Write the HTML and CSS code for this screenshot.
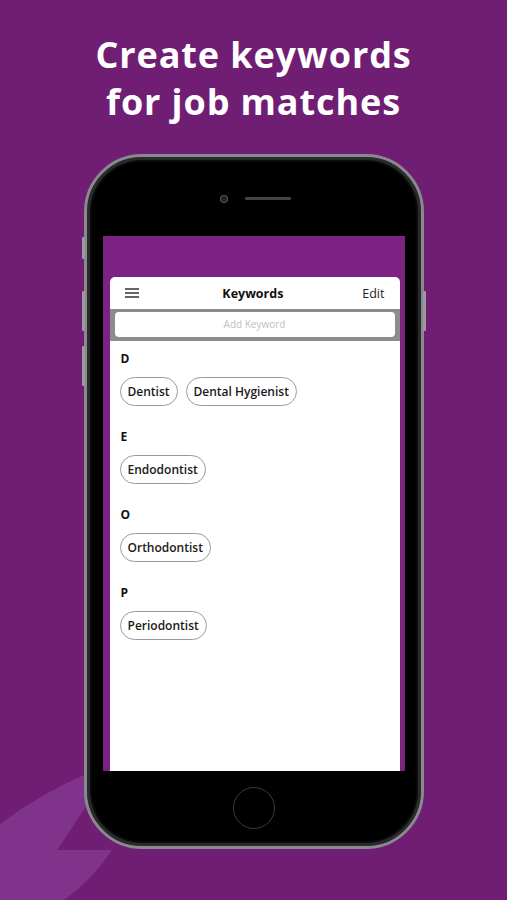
FILE: index.html
```html
<!DOCTYPE html>
<html>
<head>
<meta charset="utf-8">
<link rel="stylesheet" href="styles.css">
</head>
<body>
<svg class="deco" width="507" height="160" viewBox="0 740 507 160">
  <path d="M0,824 Q40,794 90,772 L90,800 Q72,828 57,850 L112,850 Q92,880 64,900 L0,900 Z" fill="#7f338a"/>
</svg>
<h1 class="title">Create keywords<br>for job matches</h1>
<div class="phone">
  <span class="btn btn-mute"></span>
  <span class="btn btn-vol1"></span>
  <span class="btn btn-vol2"></span>
  <span class="btn btn-power"></span>
  <div class="top">
    <span class="camera"></span>
    <span class="speaker"></span>
  </div>
  <div class="screen">
    <div class="card">
      <div class="navbar">
        <svg class="menu" width="14" height="10" viewBox="0 0 14 10"><path d="M0 1h14M0 5h14M0 9h14" stroke="#333" stroke-width="1.4"/></svg>
        <span class="nav-title">Keywords</span>
        <span class="edit">Edit</span>
      </div>
      <div class="search"><div class="input">Add Keyword</div></div>
      <div class="list">
        <div class="section">
          <div class="letter">D</div>
          <div class="chips"><span class="chip">Dentist</span><span class="chip">Dental Hygienist</span></div>
        </div>
        <div class="section">
          <div class="letter">E</div>
          <div class="chips"><span class="chip">Endodontist</span></div>
        </div>
        <div class="section">
          <div class="letter">O</div>
          <div class="chips"><span class="chip">Orthodontist</span></div>
        </div>
        <div class="section">
          <div class="letter">P</div>
          <div class="chips"><span class="chip">Periodontist</span></div>
        </div>
      </div>
    </div>
  </div>
  <div class="bottom"><span class="home"></span></div>
</div>
</body>
</html>
```
FILE: styles.css
```css
html, body { margin: 0; padding: 0; }
body {
  background: #701e74;
  width: 507px;
  height: 900px;
  overflow: hidden;
  position: relative;
  font-family: "Open Sans", "Liberation Sans", sans-serif;
}
.deco { position: absolute; left: 0; top: 740px; }
.title {
  margin: 0;
  padding-top: 31px;
  height: 123px;
  box-sizing: border-box;
  color: #fff;
  text-align: center;
  font-family: "Open Sans", sans-serif;
  font-weight: 700;
  font-size: 36px;
  line-height: 47px;
  letter-spacing: 0.9px;
}
.phone {
  position: relative;
  width: 340px;
  height: 695px;
  box-sizing: border-box;
  margin: 31px auto 0;
  background: #000;
  border: 3px solid #8a8a8e;
  border-radius: 58px;
  box-shadow: inset 0 0 0 3px #2a2a2c, inset 0 0 0 5px #0a0a0a;
  display: flex;
  flex-direction: column;
  align-items: center;
}
.btn { position: absolute; width: 3px; background: #9a9a9e; border-radius: 1px; }
.btn-mute { left: -5px; top: 80px; height: 22px; }
.btn-vol1 { left: -5px; top: 134px; height: 40px; }
.btn-vol2 { left: -5px; top: 189px; height: 40px; }
.btn-power { right: -5px; top: 134px; height: 40px; }
.top {
  height: 79px;
  display: flex;
  align-items: center;
  justify-content: center;
  gap: 18px;
  padding-left: 4px;
  box-sizing: border-box;
  padding-top: 4px;
}
.camera {
  width: 6px; height: 6px; border-radius: 50%;
  background: #222; box-shadow: 0 0 0 1px #555;
}
.speaker { width: 46px; height: 3px; border-radius: 2px; background: #444; }
.screen {
  width: 302px;
  height: 535px;
  background: #7b2282;
  padding: 41px 5px 0 7px;
  box-sizing: border-box;
  display: flex;
}
.card {
  flex: 1;
  background: #fff;
  border-radius: 5px 5px 0 0;
  display: flex;
  flex-direction: column;
}
.navbar {
  height: 32px;
  display: flex;
  align-items: center;
  padding: 0 15px;
  position: relative;
}
.menu { display: block; }
.nav-title {
  flex: 1;
  text-align: center;
  font-weight: 700;
  font-size: 12.5px;
  color: #111;
  padding-left: 5px;
}
.edit { font-size: 12.5px; color: #222; }
.search {
  background: #8c8c8c;
  padding: 3px 5px 4px;
}
.input {
  background: #fff;
  border-radius: 4px;
  height: 25px;
  line-height: 25px;
  text-align: center;
  font-size: 10px;
  color: #c0c0c0;
}
.list { padding: 8px 0 0 10px; }
.section { height: 78px; }
.letter {
  font-size: 12px;
  font-weight: 700;
  color: #111;
  height: 20px;
  line-height: 20px;
  padding-left: 1px;
}
.chips { display: flex; gap: 8px; margin-top: 8px; }
.chip {
  height: 29px;
  box-sizing: border-box;
  border: 1px solid #9a9a9a;
  border-radius: 15px;
  padding: 0 7px;
  display: flex;
  align-items: center;
  font-size: 12px;
  font-weight: 600;
  color: #1a1a1a;
}
.bottom {
  flex: 1;
  display: flex;
  align-items: center;
  justify-content: center;
  padding-bottom: 2px;
}
.home {
  width: 42px; height: 42px; border-radius: 50%;
  box-sizing: border-box;
  border: 1.5px solid #3a3a3c;
}
```
